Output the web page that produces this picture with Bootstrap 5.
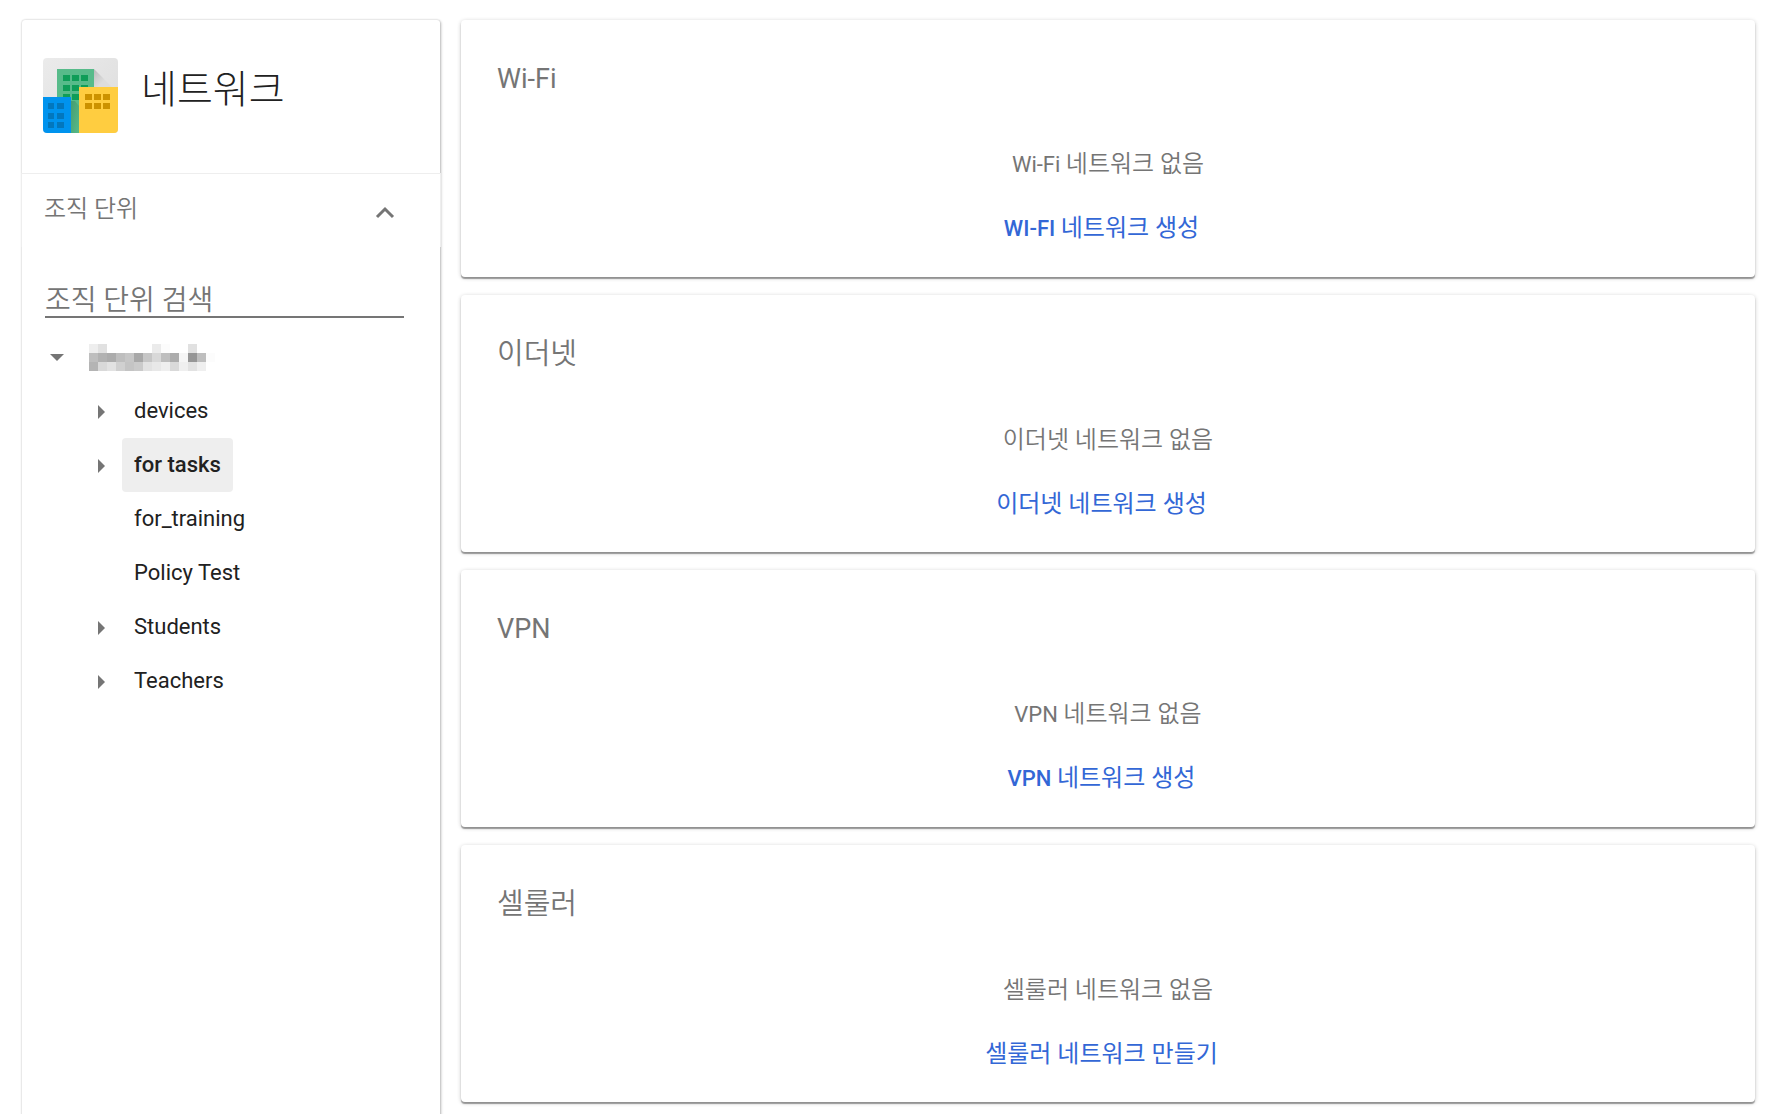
<!DOCTYPE html>
<html lang="ko">
<head>
<meta charset="utf-8">
<meta name="viewport" content="width=device-width, initial-scale=1">
<title>네트워크</title>
<link href="https://cdn.jsdelivr.net/npm/bootstrap@5.3.0/dist/css/bootstrap.min.css" rel="stylesheet">
<style>
  body { font-family: Roboto, "Noto Sans CJK KR", sans-serif; font-size: 22px; line-height: 32px; color: #212121; background: #fff; }
  .ko { font-size: 24px; font-weight: 350; }
  .shell { padding: 20px 19px 0 22px; gap: 21px; }
  .side { width: 418px; margin-bottom: -12px; background: #fff; border-radius: 3px; box-shadow: 0 0 2px rgba(0,0,0,.22), 1px 1px 3px rgba(0,0,0,.24); }
  .side-head { height: 153px; padding: 38px 21px 0; gap: 22px; }
  .side-head h1 { font-size: 39px; line-height: 64px; font-weight: 300; margin: 0; }
  .logo { width: 76px; height: 76px; }
  .side-toggle { height: 74px; margin: 0 -1px; width: calc(100% + 2px); padding: 0 44px 4px 22px; background: #fff; border: 1px solid #eee; border-bottom: 0; color: #757575; }
  .side-toggle svg { margin-top: 8px; }
  .search { margin: 33px 36px 12px 23px; }
  .search input { height: 38px; padding: 4px 0 0; border: 0; border-bottom: 2px solid #757575; border-radius: 0; font-size: 28px; font-weight: 350; line-height: 32px; color: #212121; background: transparent; }
  .search input::placeholder { color: #757575; opacity: 1; }
  .search input:focus { box-shadow: none; border-color: #3367d6; }
  .tree-row { height: 54px; }
  .twisty { width: 36px; height: 54px; padding: 0; border: 0; background: none; }
  .tree-root { padding-left: 17px; }
  .tree-root .mosaic { margin-left: 14px; }
  .tree-kids { padding-left: 62px; }
  .unit { height: 54px; padding: 0 12px; margin-left: 2px; line-height: 54px; color: #212121; text-decoration: none; border-radius: 4px; }
  .unit.leaf { margin-left: 38px; }
  .unit.current { background: #eee; font-weight: 500; }
  .net { min-height: 257px; margin-bottom: 18px; padding: 39px 36px 0; border: 0; border-radius: 4px; background: #fff; box-shadow: 0 2px 1px rgba(0,0,0,.34), 0 1px 4px rgba(0,0,0,.22); color: #757575; }
  .net h2 { font-size: 27px; line-height: 40px; font-weight: 400; margin: 0 0 49px; }
  .net h2 .ko { font-size: 29px; }
  .net p { margin: 0 0 30px; }
  .net .make { margin-right: 13px; padding: 0; border: 0; font-size: 22px; line-height: 32px; font-weight: 500; color: #3367d6; }
  .net .make .ko { font-weight: 400; }
</style>
<script src="https://cdn.jsdelivr.net/npm/bootstrap@5.3.0/dist/js/bootstrap.bundle.min.js"></script>
</head>
<body>
<div class="shell d-flex align-items-stretch min-vh-100 overflow-hidden">
  <aside class="side flex-shrink-0">
    <header class="side-head d-flex align-items-start">
      <svg class="logo flex-shrink-0" viewBox="0 0 76 76" aria-hidden="true">
        <defs>
          <clipPath id="tile"><rect width="75" height="75" rx="4"/></clipPath>
          <linearGradient id="wall" x1="0" y1="0" x2="1" y2="1"><stop offset="0" stop-color="#ebebeb"/><stop offset="1" stop-color="#dcdcdc"/></linearGradient>
          <linearGradient id="cast" x1="0" y1="0" x2="1" y2="1"><stop offset="0" stop-color="#bbb"/><stop offset=".6" stop-color="#ddd"/></linearGradient>
          <linearGradient id="lane" x1="0" y1="0" x2="1" y2="1"><stop offset="0" stop-color="#469c70"/><stop offset="1" stop-color="#57bb8a"/></linearGradient>
        </defs>
        <g clip-path="url(#tile)">
          <rect width="75" height="75" fill="url(#wall)"/>
          <path d="M51 11l18 18H51z" fill="url(#cast)"/>
          <rect x="14" y="11" width="37" height="64" fill="#57bb8a"/>
          <path d="M28 43h4l4 5v27h-8z" fill="url(#lane)"/>
          <path d="M20 17h7v6h-7zm9 0h7v6h-7zm9 0h7v6h-7zM20 27h7v6h-7zm9 0h7v6h-7zm9 0h7v6h-7zM20 36h7v6h-7zm9 0h7v6h-7z" fill="#0f9d58"/>
          <rect x="36" y="29" width="39" height="46" fill="#ffcd40"/>
          <path d="M42 36h7v6h-7zm9 0h7v6h-7zm9 0h7v6h-7zM42 45h7v6h-7zm9 0h7v6h-7zm9 0h7v6h-7z" fill="#cc9200"/>
          <rect y="39" width="28" height="36" fill="#0093ee"/>
          <path d="M5 45h6v6H5zm9 0h7v6h-7zM5 55h6v6H5zm9 0h7v6h-7zM5 64h6v6H5zm9 0h7v6h-7z" fill="#0277bd"/>
        </g>
      </svg>
      <h1>네트워크</h1>
    </header>
    <button type="button" class="side-toggle d-flex align-items-center justify-content-between" aria-expanded="true" aria-controls="units">
      <span class="ko">조직 단위</span>
      <svg width="22" height="22" viewBox="0 0 22 22" fill="none" stroke="#757575" stroke-width="3" aria-hidden="true"><path d="M3 15l8-8 8 8"/></svg>
    </button>
    <div id="units">
      <div class="search"><input type="text" class="form-control" aria-label="조직 단위 검색" placeholder="조직 단위 검색"></div>
      <div class="tree-root tree-row d-flex align-items-center">
        <button type="button" class="twisty" aria-label="접기"><svg width="14" height="8" viewBox="0 0 14 8" aria-hidden="true"><path d="M0 0h14L7 7z" fill="#757575"/></svg></button>
        <svg class="mosaic" width="126" height="27" viewBox="0 0 14 3" shape-rendering="crispEdges" aria-hidden="true">
          <path d="M0 0h1v1H0z" fill="#eee"/><path d="M1 0h1v1H1zM11 0h1v1h-1z" fill="#e1e1e1"/><path d="M7 0h1v1H7z" fill="#ebebeb"/><path d="M8 0h1v1H8zM13 1h1v1h-1z" fill="#fcfcfc"/>
          <path d="M0 1h1v1H0zM3 1h1v1H3zM8 1h1v1H8zM12 1h1v1h-1z" fill="#bebebe"/><path d="M1 1h1v1H1z" fill="#b2b2b2"/><path d="M2 1h1v1H2zM9 1h1v1H9z" fill="#acacac"/><path d="M4 1h1v1H4zM6 1h1v1H6z" fill="#c6c6c6"/><path d="M5 1h1v1H5z" fill="#a8a8a8"/><path d="M7 1h1v1H7z" fill="#d8d8d8"/><path d="M10 1h1v1h-1z" fill="#f5f5f5"/><path d="M11 1h1v1h-1z" fill="#969696"/>
          <path d="M0 2h1v1H0z" fill="#b4b4b4"/><path d="M1 2h1v1H1zM9 2h1v1H9z" fill="#d9d9d9"/><path d="M2 2h1v1H2zM6 2h1v1H6zM11 2h1v1h-1z" fill="#e2e2e2"/><path d="M3 2h1v1H3z" fill="#d0d0d0"/><path d="M4 2h1v1H4z" fill="#c4c4c4"/><path d="M5 2h1v1H5z" fill="#cacaca"/><path d="M7 2h1v1H7z" fill="#e8e8e8"/><path d="M8 2h1v1H8zM10 2h1v1h-1zM12 2h1v1h-1z" fill="#efefef"/>
        </svg>
      </div>
      <ul class="tree-kids list-unstyled mb-0">
        <li class="tree-row d-flex"><button type="button" class="twisty" aria-label="devices 펼치기"><svg width="8" height="14" viewBox="0 0 8 14" aria-hidden="true"><path d="M0 0v14l7-7z" fill="#757575"/></svg></button><a class="unit" href="#">devices</a></li>
        <li class="tree-row d-flex"><button type="button" class="twisty" aria-label="for tasks 펼치기"><svg width="8" height="14" viewBox="0 0 8 14" aria-hidden="true"><path d="M0 0v14l7-7z" fill="#757575"/></svg></button><a class="unit current" href="#" aria-current="true">for tasks</a></li>
        <li class="tree-row d-flex"><a class="unit leaf" href="#">for_training</a></li>
        <li class="tree-row d-flex"><a class="unit leaf" href="#">Policy Test</a></li>
        <li class="tree-row d-flex"><button type="button" class="twisty" aria-label="Students 펼치기"><svg width="8" height="14" viewBox="0 0 8 14" aria-hidden="true"><path d="M0 0v14l7-7z" fill="#757575"/></svg></button><a class="unit" href="#">Students</a></li>
        <li class="tree-row d-flex"><button type="button" class="twisty" aria-label="Teachers 펼치기"><svg width="8" height="14" viewBox="0 0 8 14" aria-hidden="true"><path d="M0 0v14l7-7z" fill="#757575"/></svg></button><a class="unit" href="#">Teachers</a></li>
      </ul>
    </div>
  </aside>
  <main class="flex-grow-1">
    <section class="net card">
      <h2>Wi-Fi</h2>
      <div class="text-center">
        <p>Wi-Fi <span class="ko">네트워크 없음</span></p>
        <button type="button" class="make btn">WI-FI <span class="ko">네트워크 생성</span></button>
      </div>
    </section>
    <section class="net card">
      <h2><span class="ko">이더넷</span></h2>
      <div class="text-center">
        <p><span class="ko">이더넷 네트워크 없음</span></p>
        <button type="button" class="make btn"><span class="ko">이더넷 네트워크 생성</span></button>
      </div>
    </section>
    <section class="net card">
      <h2>VPN</h2>
      <div class="text-center">
        <p>VPN <span class="ko">네트워크 없음</span></p>
        <button type="button" class="make btn">VPN <span class="ko">네트워크 생성</span></button>
      </div>
    </section>
    <section class="net card mb-0">
      <h2><span class="ko">셀룰러</span></h2>
      <div class="text-center">
        <p><span class="ko">셀룰러 네트워크 없음</span></p>
        <button type="button" class="make btn"><span class="ko">셀룰러 네트워크 만들기</span></button>
      </div>
    </section>
  </main>
</div>
</body>
</html>
